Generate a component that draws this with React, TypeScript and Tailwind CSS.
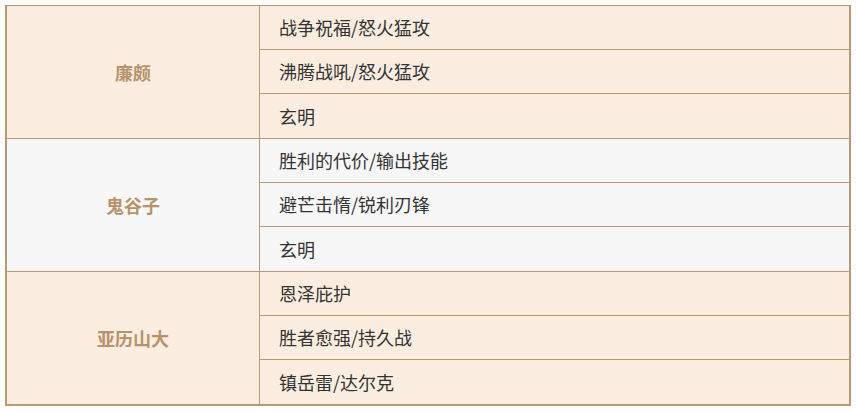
const groups = [
  {
    name: "廉颇",
    bg: "bg-[#fbeee0]",
    items: ["战争祝福/怒火猛攻", "沸腾战吼/怒火猛攻", "玄明"],
  },
  {
    name: "鬼谷子",
    bg: "bg-[#f7f7f7]",
    items: ["胜利的代价/输出技能", "避芒击惰/锐利刃锋", "玄明"],
  },
  {
    name: "亚历山大",
    bg: "bg-[#fbeee0]",
    items: ["恩泽庇护", "胜者愈强/持久战", "镇岳雷/达尔克"],
  },
];

export default function App() {
  return (
    <div className="w-[857px] h-[411px] bg-white pt-[5px] pl-[5px] font-['Microsoft_YaHei','Noto_Sans_CJK_SC',sans-serif]">
      <div className="w-[846px] border-t border-l-2 border-r-2 border-b border-[#b89a72]">
        {groups.map((g) => (
          <div key={g.name} className={`flex border-b border-[#b89a72] ${g.bg}`}>
            <div className="w-[253px] border-r border-[#b89a72] flex items-center justify-center text-[18px] font-bold text-[#b8926a]">
              {g.name}
            </div>
            <div className="flex-1 flex flex-col">
              {g.items.map((t, i) => (
                <div
                  key={i}
                  className={`h-[44px] flex items-center pl-[19px] text-[18px] text-[#333] ${
                    i < 2 ? "border-b border-[#b89a72]" : ""
                  }`}
                >
                  {t}
                </div>
              ))}
            </div>
          </div>
        ))}
      </div>
    </div>
  );
}
